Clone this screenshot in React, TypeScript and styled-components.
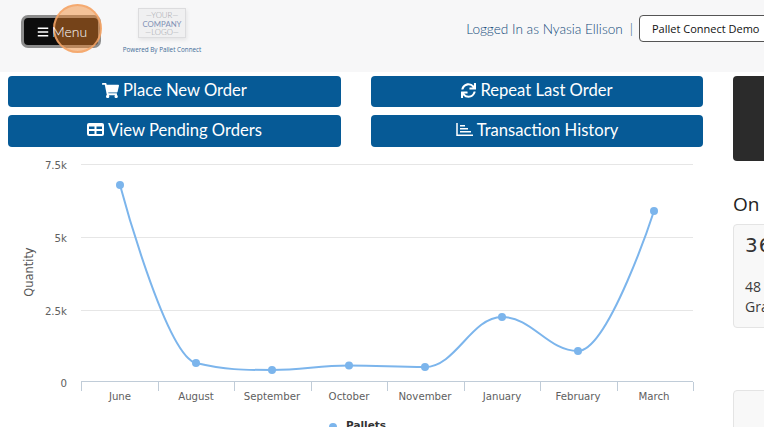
import React from 'react';
import styled, { createGlobalStyle } from 'styled-components';
import { FaBars, FaShoppingCart, FaSync } from 'react-icons/fa';

const GlobalStyle = createGlobalStyle`
  html, body {
    margin: 0;
    padding: 0;
    height: 427px;
    overflow: hidden;
    background: #fff;
    font-family: Lato, "Open Sans", sans-serif;
  }
`;

const Page = styled.div`
  width: 764px;
  height: 427px;
  overflow: hidden;
`;

const Header = styled.header`
  height: 72px;
  box-sizing: border-box;
  background: #f7f7f8;
  display: flex;
  align-items: flex-start;
  justify-content: space-between;
`;

const HeaderLeft = styled.div`
  display: flex;
  align-items: flex-start;
  padding: 15px 0 0 21px;
`;

const MenuWrap = styled.div`
  position: relative;
  width: 80px;
  height: 33px;
`;

const MenuButton = styled.button`
  width: 100%;
  height: 100%;
  box-sizing: border-box;
  border: 3px solid #8c8c8c;
  border-radius: 7px;
  background: #0d0d0d;
  color: #fff;
  font: 300 14px Lato, sans-serif;
  display: flex;
  align-items: center;
  justify-content: center;
  padding: 0 0 0 2px;
`;

const MenuLabel = styled.span`
  position: relative;
  z-index: 2;
  display: flex;
  align-items: center;
  gap: 3px;
`;

const Highlight = styled.span`
  position: absolute;
  left: 32px;
  top: -11px;
  width: 49px;
  height: 49px;
  box-sizing: border-box;
  border-radius: 50%;
  background: rgba(240, 130, 40, 0.46);
  border: 2px solid rgba(245, 165, 105, 0.85);
`;

const Brand = styled.div`
  margin: -7px 0 0 21px;
  width: 80px;
  display: flex;
  flex-direction: column;
  align-items: center;
`;

const LogoBox = styled.div`
  width: 48px;
  height: 30px;
  box-sizing: border-box;
  background: #f0f0f1;
  border: 1px solid #dcdcde;
  box-shadow: 1px 2px 4px rgba(0, 0, 0, 0.08);
  color: #9a9ea6;
  font: 300 7.8px/8.5px Lato, sans-serif;
  text-align: center;
  padding-top: 2px;
  white-space: nowrap;
`;

const LogoAccent = styled.span`
  color: #7f90b5;
  font-weight: 400;
`;

const Powered = styled.div`
  margin-top: 7px;
  color: #3f6c97;
  font: 6.3px "Open Sans", sans-serif;
  white-space: nowrap;
`;

const HeaderRight = styled.div`
  display: flex;
  align-items: center;
  padding-top: 15px;
  margin-right: -8px;
  color: #124a7a;
  font-size: 13.6px;
  font-weight: 300;
`;

const Separator = styled.span`
  margin: 0 6px 0 7px;
`;

const CompanySelect = styled.div`
  width: 133px;
  height: 27px;
  box-sizing: border-box;
  border: 1px solid #555;
  border-radius: 4px;
  background: #fff;
  color: #111;
  font: 400 11px/25px "Open Sans", sans-serif;
  padding-left: 12px;
  white-space: nowrap;
`;

const Main = styled.main`
  display: grid;
  grid-template-columns: 695px 400px;
  column-gap: 30px;
  padding: 4px 0 0 8px;
`;

const LeftColumn = styled.section`
  display: flex;
  flex-direction: column;
`;

const ActionGrid = styled.div`
  display: grid;
  grid-template-columns: 333px 332px;
  grid-template-rows: 31px 32px;
  column-gap: 30px;
  row-gap: 8px;
`;

const ActionButton = styled.button`
  border: 0;
  border-radius: 4px;
  background: #065a96;
  color: #fff;
  font: 400 16.6px Lato, sans-serif;
  display: flex;
  align-items: center;
  justify-content: center;
  gap: 4px;
  padding: 0 0 3px;
`;

const ChartBox = styled.div`
  margin: 8px 0 0 -8px;
  width: 703px;
  height: 280px;
`;

const RightColumn = styled.aside`
  display: flex;
  flex-direction: column;
`;

const DarkPanel = styled.div`
  height: 85px;
  background: #2b2b2b;
  border-radius: 4px;
`;

const SectionTitle = styled.h2`
  margin: 30px 0 7px;
  font: 400 19px/26px "Open Sans", sans-serif;
  color: #222;
`;

const StatCard = styled.div`
  height: 104px;
  box-sizing: border-box;
  background: #f8f8f8;
  border: 1px solid #e4e4e4;
  border-radius: 4px;
  padding: 6px 0 0 11px;
  color: #333;
`;

const StatValue = styled.div`
  font: 400 20px/28px "DejaVu Sans", sans-serif;
  letter-spacing: 1px;
`;

const StatLine = styled.div<{ $first?: boolean }>`
  margin-top: ${props => (props.$first ? '18px' : '0')};
  font: 400 14px/20px "Open Sans", sans-serif;
  color: #3a3a3a;
`;

const EmptyCard = styled(StatCard)`
  margin-top: 62px;
`;

const ChartText = styled.text`
  font-family: "DejaVu Sans", sans-serif;
  font-size: 10.2px;
  fill: #606060;
`;

const AxisTitle = styled(ChartText)`
  font-size: 11.4px;
  fill: #555;
`;

const LegendText = styled(ChartText)`
  font-weight: 700;
  font-size: 10.5px;
  fill: #333;
`;

const TableIcon = () => (
  <svg width="17" height="13" viewBox="0 0 17 13">
    <path
      fill="#fff"
      fillRule="evenodd"
      d="M2 0h13a2 2 0 0 1 2 2v9a2 2 0 0 1-2 2H2a2 2 0 0 1-2-2V2a2 2 0 0 1 2-2zM2 3.500v2.500h5.500V3.500zM9.500 3.500v2.500H15V3.500zM2 8v3h5.500V8zM9.500 8v3H15V8z"
    />
  </svg>
);

const HistoryIcon = () => (
  <svg width="17" height="13" viewBox="0 0 17 13" fill="none" stroke="#fff" strokeWidth="1.500">
    <path d="M1 0v12.200h16" />
    <path d="M4 2.800h5M4 5.800h8M4 8.800h11" />
  </svg>
);

// chart data, already in pixels of the svg
const points = [
  { label: 'June', x: 120, y: 185 },
  { label: 'August', x: 196, y: 363 },
  { label: 'September', x: 272, y: 370 },
  { label: 'October', x: 349, y: 365.5 },
  { label: 'November', x: 425, y: 367 },
  { label: 'January', x: 502, y: 317 },
  { label: 'February', x: 578, y: 351 },
  { label: 'March', x: 654, y: 211 },
];

const yLabels = [
  { label: '7.5k', y: 164 },
  { label: '5k', y: 237 },
  { label: '2.5k', y: 310 },
  { label: '0', y: 382 },
];

const ticks = [81, 158, 234, 311, 387, 464, 540, 617, 693];

// spline smoothing: controls stay on one line through the point, no false extremes
const controls = (i: number) => {
  const p = points[i];
  const prev = points[i - 1];
  const next = points[i + 1];
  if (!prev || !next) return { lx: p.x, ly: p.y, rx: p.x, ry: p.y };
  const s = 1.5;
  const lx = (s * p.x + prev.x) / (s + 1);
  const rx = (s * p.x + next.x) / (s + 1);
  let ly = (s * p.y + prev.y) / (s + 1);
  let ry = (s * p.y + next.y) / (s + 1);
  const correction = ((ry - ly) * (rx - p.x)) / (rx - lx) + p.y - ry;
  ly += correction;
  ry += correction;
  if (ly > prev.y && ly > p.y) {
    ly = Math.max(prev.y, p.y);
    ry = 2 * p.y - ly;
  } else if (ly < prev.y && ly < p.y) {
    ly = Math.min(prev.y, p.y);
    ry = 2 * p.y - ly;
  }
  if (ry > next.y && ry > p.y) {
    ry = Math.max(next.y, p.y);
    ly = 2 * p.y - ry;
  } else if (ry < next.y && ry < p.y) {
    ry = Math.min(next.y, p.y);
    ly = 2 * p.y - ry;
  }
  return { lx, ly, rx, ry };
};

const linePath = () => {
  let d = `M${points[0].x} ${points[0].y}`;
  for (let i = 1; i < points.length; i++) {
    const from = controls(i - 1);
    const to = controls(i);
    d += ` C${from.rx} ${from.ry} ${to.lx} ${to.ly} ${points[i].x} ${points[i].y}`;
  }
  return d;
};

const QuantityChart = () => (
  <svg width="703" height="280" viewBox="0 155 703 280">
    {yLabels.slice(0, 3).map(l => (
      <line key={l.label} x1="81" x2="693" y1={l.y + 0.5} y2={l.y + 0.5} stroke="#e6e6e6" />
    ))}
    {yLabels.map(l => (
      <ChartText key={l.label} x="67" y={l.y + 4.5} textAnchor="end">
        {l.label}
      </ChartText>
    ))}
    <AxisTitle x="33" y="272" textAnchor="middle" transform="rotate(-90 33 272)">
      Quantity
    </AxisTitle>
    <line x1="81" x2="693" y1="381.5" y2="381.5" stroke="#c0ccd8" />
    {ticks.map(x => (
      <line key={x} x1={x + 0.5} x2={x + 0.5} y1="382" y2="391" stroke="#c0ccd8" />
    ))}
    {points.map(p => (
      <ChartText key={p.label} x={p.x} y="400" textAnchor="middle">
        {p.label}
      </ChartText>
    ))}
    <path d={linePath()} fill="none" stroke="#7cb5ec" strokeWidth="2" />
    {points.map(p => (
      <circle key={p.label} cx={p.x} cy={p.y} r="4" fill="#7cb5ec" />
    ))}
    <circle cx="333" cy="427" r="4" fill="#7cb5ec" />
    <LegendText x="346" y="429">
      Pallets
    </LegendText>
  </svg>
);

export default function App() {
  return (
    <Page>
      <GlobalStyle />
      <Header>
        <HeaderLeft>
          <MenuWrap>
            <MenuButton>
              <MenuLabel>
                <FaBars size={12} /> Menu
              </MenuLabel>
            </MenuButton>
            <Highlight />
          </MenuWrap>
          <Brand>
            <LogoBox>
              —YOUR—
              <br />
              <LogoAccent>COMPANY</LogoAccent>
              <br />
              —LOGO—
            </LogoBox>
            <Powered>Powered By Pallet Connect</Powered>
          </Brand>
        </HeaderLeft>
        <HeaderRight>
          Logged In as Nyasia Ellison
          <Separator>|</Separator>
          <CompanySelect>Pallet Connect Demo</CompanySelect>
        </HeaderRight>
      </Header>
      <Main>
        <LeftColumn>
          <ActionGrid>
            <ActionButton>
              <FaShoppingCart size={17} /> Place New Order
            </ActionButton>
            <ActionButton>
              <FaSync size={15} /> Repeat Last Order
            </ActionButton>
            <ActionButton>
              <TableIcon /> View Pending Orders
            </ActionButton>
            <ActionButton>
              <HistoryIcon /> Transaction History
            </ActionButton>
          </ActionGrid>
          <ChartBox>
            <QuantityChart />
          </ChartBox>
        </LeftColumn>
        <RightColumn>
          <DarkPanel />
          <SectionTitle>On</SectionTitle>
          <StatCard>
            <StatValue>36</StatValue>
            <StatLine $first>48</StatLine>
            <StatLine>Gra</StatLine>
          </StatCard>
          <EmptyCard />
        </RightColumn>
      </Main>
    </Page>
  );
}
